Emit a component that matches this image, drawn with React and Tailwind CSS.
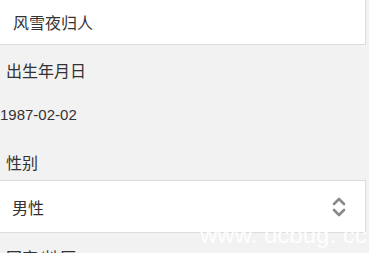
import React from "react";

function ChevronUpDown() {
  return (
    <svg width="16" height="24" viewBox="0 0 16 24" fill="none" stroke="#8a8a8a" strokeWidth="2.6" strokeLinecap="round" strokeLinejoin="round">
      <path d="M3 9 L8 4 L13 9" />
      <path d="M3 15 L8 20 L13 15" />
    </svg>
  );
}

export default function App() {
  return (
    <div
      className="relative w-[369px] h-[253px] overflow-hidden bg-[#f2f2f2] text-[#333]"
      style={{ fontFamily: '"Noto Sans CJK SC", "Noto Sans", sans-serif' }}
    >
      <div className="w-[366px] h-[45px] bg-white border-b border-r border-[#dcdcdc] flex items-center pl-[13px] text-[16px]">
        风雪夜归人
      </div>
      <div className="h-[48px] flex items-center pl-[6px] text-[16px] mt-[1px]">出生年月日</div>
      <div
        className="h-[42px] flex items-center text-[15px]"
        style={{ fontFamily: '"Liberation Sans", sans-serif' }}
      >
        1987-02-02
      </div>
      <div className="h-[44px] flex items-center pl-[6px] text-[16px] pt-[8px]">性别</div>
      <div className="w-[366px] h-[53px] bg-white border-y border-r border-[#dcdcdc] flex items-center justify-between pl-[12px] pr-[18px] text-[16px]">
        <span>男性</span>
        <ChevronUpDown />
      </div>
      <div className="h-[30px] pl-[6px] pt-[12px] text-[16px]">国家/地区</div>
      <div
        className="absolute left-[200px] top-[223px] text-[24px] leading-none text-white/90 whitespace-pre"
        style={{ fontFamily: '"Liberation Sans", sans-serif' }}
      >
        www. ucbug. cc
      </div>
    </div>
  );
}
